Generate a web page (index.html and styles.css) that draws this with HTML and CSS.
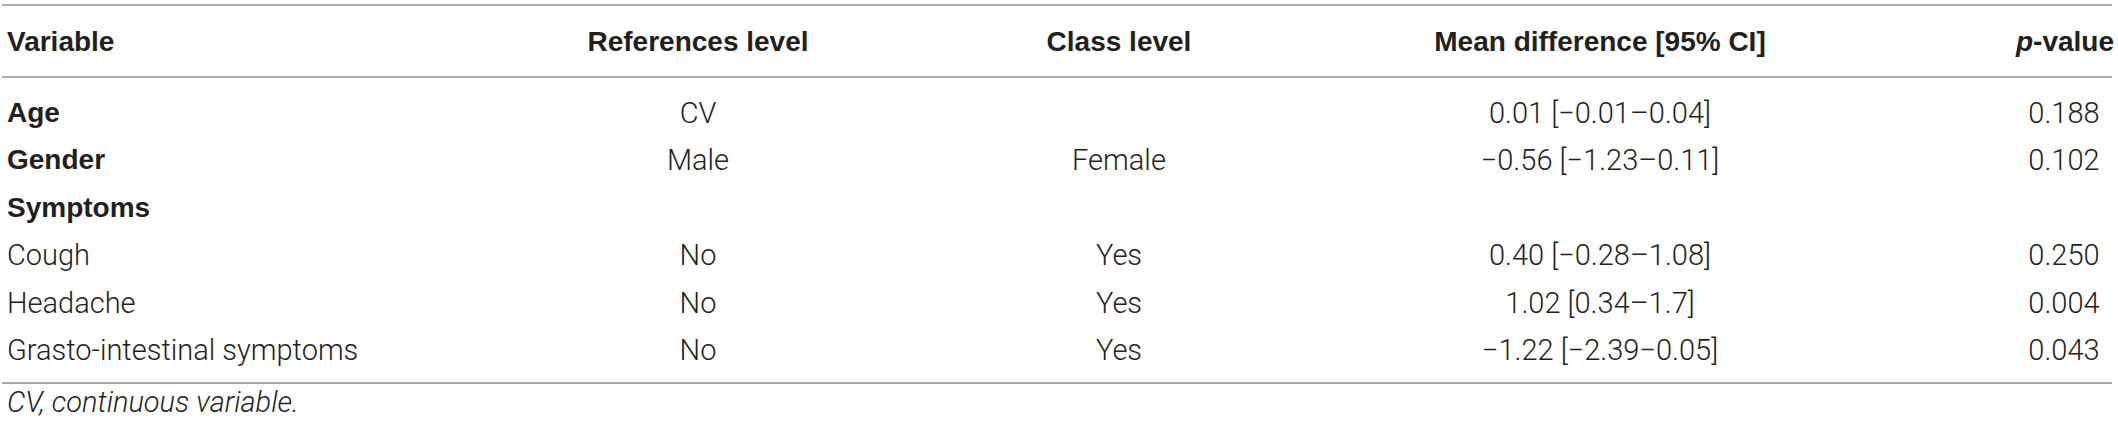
FILE: index.html
```html
<!DOCTYPE html>
<html lang="en">
<head>
<meta charset="utf-8">
<title>Table</title>
<link rel="stylesheet" href="styles.css">
</head>
<body>
<div class="wrap">
  <div class="tbl">
    <div class="row head">
      <div class="cell left">Variable</div>
      <div class="cell">References level</div>
      <div class="cell">Class level</div>
      <div class="cell">Mean difference [95% CI]</div>
      <div class="cell pcol"><i>p</i>-value</div>
    </div>
    <div class="body">
      <div class="row">
        <div class="cell left bold">Age</div>
        <div class="cell">CV</div>
        <div class="cell"></div>
        <div class="cell">0.01 [−0.01–0.04]</div>
        <div class="cell pcol">0.188</div>
      </div>
      <div class="row">
        <div class="cell left bold">Gender</div>
        <div class="cell">Male</div>
        <div class="cell">Female</div>
        <div class="cell">−0.56 [−1.23–0.11]</div>
        <div class="cell pcol">0.102</div>
      </div>
      <div class="row">
        <div class="cell left bold">Symptoms</div>
        <div class="cell"></div>
        <div class="cell"></div>
        <div class="cell"></div>
        <div class="cell pcol"></div>
      </div>
      <div class="row">
        <div class="cell left">Cough</div>
        <div class="cell">No</div>
        <div class="cell">Yes</div>
        <div class="cell">0.40 [−0.28–1.08]</div>
        <div class="cell pcol">0.250</div>
      </div>
      <div class="row">
        <div class="cell left">Headache</div>
        <div class="cell">No</div>
        <div class="cell">Yes</div>
        <div class="cell">1.02 [0.34–1.7]</div>
        <div class="cell pcol">0.004</div>
      </div>
      <div class="row">
        <div class="cell left">Grasto-intestinal symptoms</div>
        <div class="cell">No</div>
        <div class="cell">Yes</div>
        <div class="cell">−1.22 [−2.39−0.05]</div>
        <div class="cell pcol">0.043</div>
      </div>
    </div>
  </div>
  <p class="note">CV, continuous variable.</p>
</div>
</body>
</html>
```

FILE: styles.css
```css
html, body {
  margin: 0;
  padding: 0;
  background: #ffffff;
}

.wrap {
  padding: 4px 0 0 2px;
  width: 2110px;
}

.tbl {
  width: 2110px;
  color: #231f20;
  font-family: Roboto, "Liberation Sans", sans-serif;
  font-weight: 300;
  font-size: 29px;
}

.row {
  display: grid;
  grid-template-columns: 478px 436px 406px 556px 234px;
  align-items: center;
  height: 47.5px;
}

.cell {
  text-align: center;
  white-space: nowrap;
}

.cell.left {
  text-align: left;
  padding-left: 5px;
}

.cell.pcol {
  padding-left: 138px;
}

.row.head {
  height: 70px;
  padding-top: 2px;
  box-sizing: border-box;
  height: 74px;
  border-top: 2px solid #a9a9a9;
  border-bottom: 2px solid #a9a9a9;
  font-family: "Liberation Sans", Arial, sans-serif;
  font-weight: bold;
  font-size: 28px;
}

.body {
  padding: 11px 0 8px;
  border-bottom: 2px solid #a9a9a9;
}

.bold {
  font-family: "Liberation Sans", Arial, sans-serif;
  font-weight: bold;
  font-size: 28px;
}

.note {
  margin: 0;
  padding: 0 0 0 5px;
  font-family: Roboto, "Liberation Sans", sans-serif;
  font-weight: 300;
  font-style: italic;
  font-size: 29px;
  line-height: 36px;
  color: #231f20;
}
```
